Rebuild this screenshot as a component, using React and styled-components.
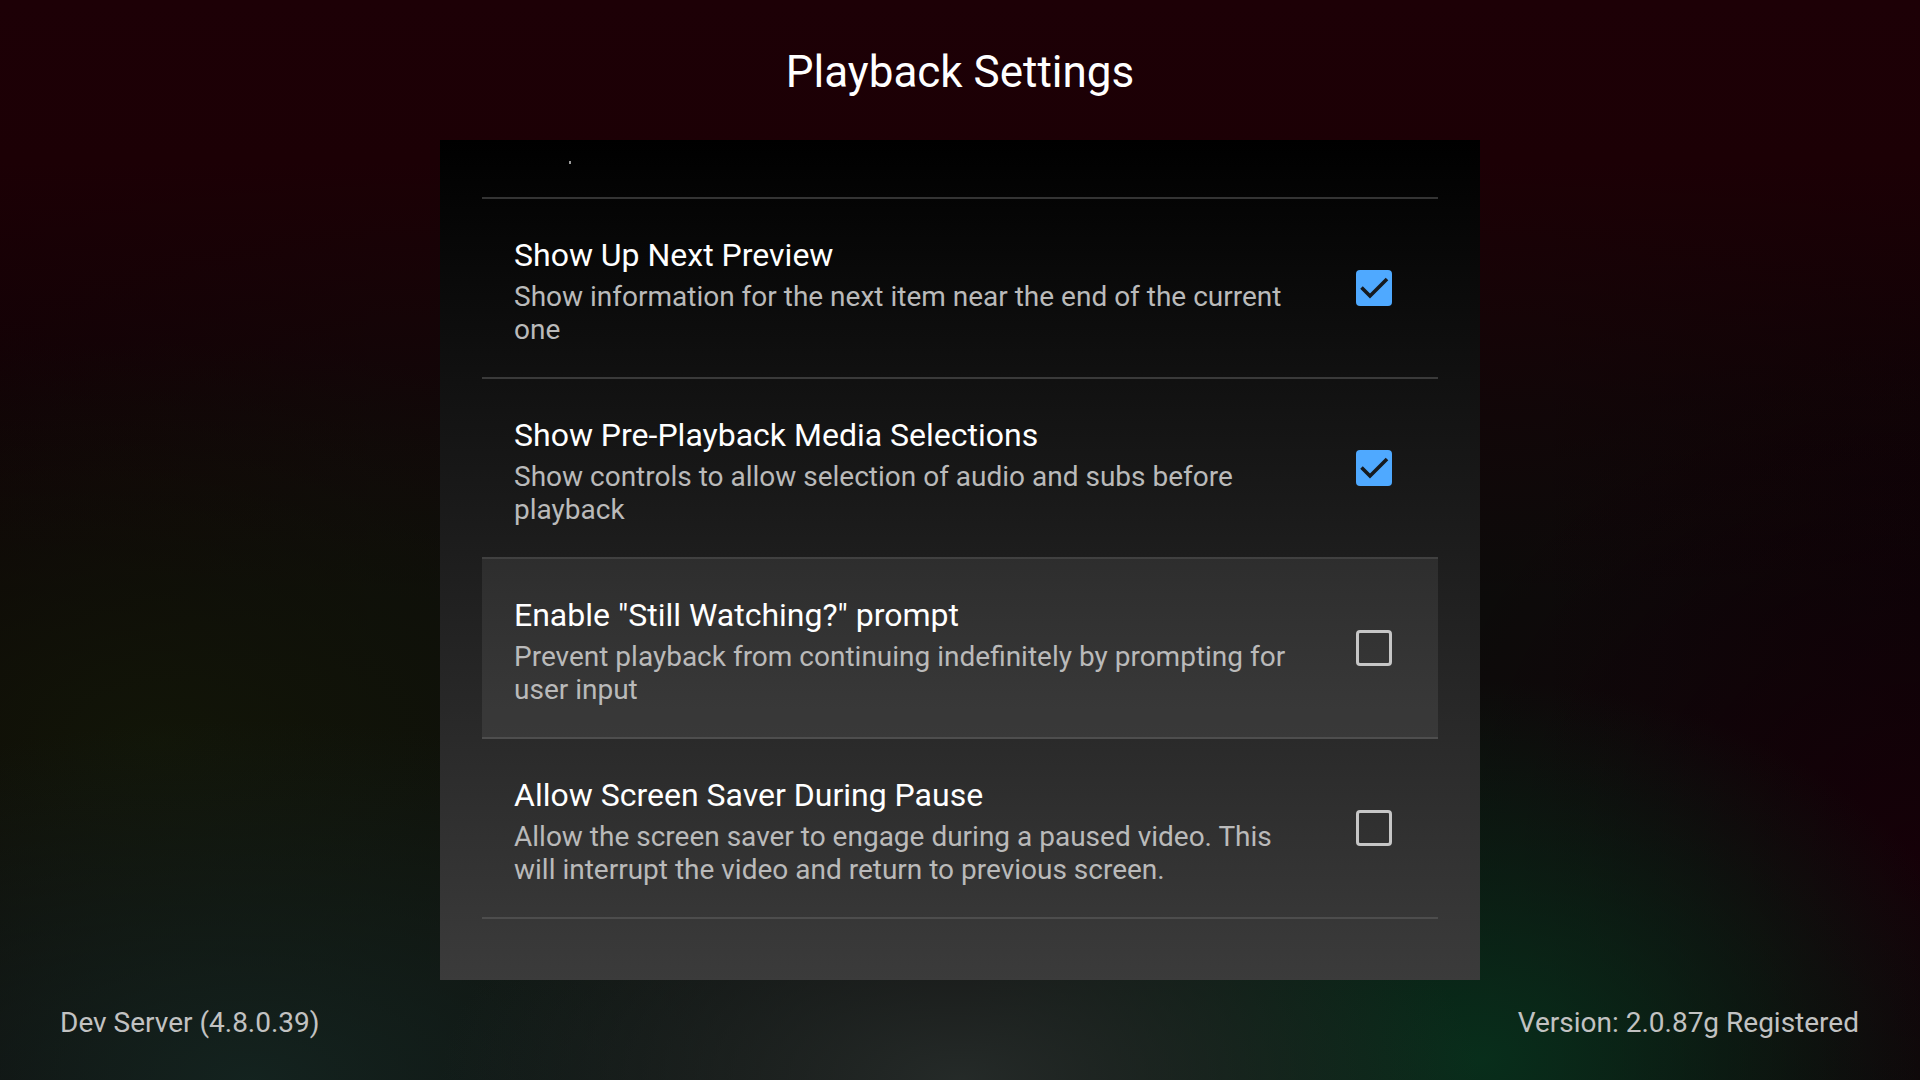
import React from "react";
import styled, { createGlobalStyle } from "styled-components";

const Global = createGlobalStyle`
  html, body { margin: 0; padding: 0; }
  body {
    width: 1920px;
    height: 1080px;
    overflow: hidden;
    font-family: Roboto, "Noto Sans", "Liberation Sans", sans-serif;
    background: #0a0707;
  }
`;

const Page = styled.div`
  width: 1920px;
  height: 1080px;
  display: flex;
  flex-direction: column;
  background:
    radial-gradient(ellipse 520px 260px at 960px 1080px, rgba(38, 44, 42, 0.95), rgba(38, 44, 42, 0) 100%),
    radial-gradient(ellipse 520px 380px at 1480px 1060px, rgba(8, 48, 28, 0.95), rgba(8, 48, 28, 0) 100%),
    radial-gradient(ellipse 700px 360px at 250px 1080px, rgba(20, 36, 32, 0.95), rgba(20, 36, 32, 0) 100%),
    radial-gradient(ellipse 520px 520px at 1920px 860px, rgba(22, 0, 8, 0.95), rgba(22, 0, 8, 0) 100%),
    radial-gradient(ellipse 720px 400px at 160px 740px, rgba(18, 22, 8, 0.95), rgba(18, 22, 8, 0) 100%),
    linear-gradient(180deg, #1d0006 0px, #1c0005 160px, rgba(22, 2, 6, 0.55) 400px, rgba(12, 10, 10, 0) 600px),
    linear-gradient(90deg, #0c0306 0%, rgba(12, 3, 6, 0) 20%, rgba(12, 3, 6, 0) 80%, #080406 100%),
    #0c0b0a;
`;

const Header = styled.header`
  height: 140px;
  box-sizing: border-box;
  padding-top: 46px;
  text-align: center;
`;

const Title = styled.h1`
  margin: 0;
  font-size: 44px;
  line-height: 52px;
  font-weight: 400;
  color: #ffffff;
`;

const Panel = styled.main`
  width: 1040px;
  height: 840px;
  margin: 0 auto;
  box-sizing: border-box;
  padding: 0 42px;
  background: linear-gradient(180deg, #000000 0%, #3b3b3b 100%);
  display: flex;
  flex-direction: column;
`;

const TopStub = styled.div`
  height: 59px;
  box-sizing: border-box;
  padding: 21px 0 0 87px;
  border-bottom: 2px solid rgba(100, 100, 100, 0.5);
`;

const Speck = styled.span`
  display: block;
  width: 2px;
  height: 3px;
  background: #9a9a9a;
`;

const Row = styled.div`
  height: 180px;
  box-sizing: border-box;
  display: flex;
  align-items: center;
  padding: 0 46px 0 32px;
  border-bottom: 2px solid rgba(100, 100, 100, 0.5);
  background: ${(p) => (p.$focused ? "rgba(255, 255, 255, 0.075)" : "transparent")};
`;

const TextCol = styled.div`
  width: 790px;
  padding-top: 3px;
  display: flex;
  flex-direction: column;
`;

const RowTitle = styled.div`
  font-size: 32px;
  line-height: 44px;
  color: #ffffff;
`;

const RowDesc = styled.div`
  margin-top: 3px;
  font-size: 28px;
  line-height: 33px;
  color: #bababa;
`;

const Box = styled.div`
  margin-left: auto;
  width: 36px;
  height: 36px;
  box-sizing: border-box;
  border-radius: 4px;
  background: ${(p) => (p.$checked ? "#4fa9ff" : "transparent")};
  border: ${(p) => (p.$checked ? "none" : "3px solid #c6c6c6")};
  display: flex;
  align-items: center;
  justify-content: center;
  flex-shrink: 0;
`;

const Footer = styled.footer`
  flex: 1;
  box-sizing: border-box;
  padding: 26px 61px 0 60px;
  display: flex;
  justify-content: space-between;
  align-items: flex-start;
`;

const FootText = styled.span`
  font-size: 28px;
  line-height: 34px;
  color: #c2c2c2;
`;

const Check = () => (
  <svg width="36" height="36" viewBox="0 0 36 36">
    <path d="M5.5 17.5 L14 26 L31 9" fill="none" stroke="#161a1f" strokeWidth="3.6" strokeLinecap="butt" strokeLinejoin="miter" />
  </svg>
);

const settings = [
  {
    title: "Show Up Next Preview",
    desc: "Show information for the next item near the end of the current one",
    checked: true,
  },
  {
    title: "Show Pre-Playback Media Selections",
    desc: "Show controls to allow selection of audio and subs before playback",
    checked: true,
  },
  {
    title: 'Enable "Still Watching?" prompt',
    desc: "Prevent playback from continuing indefinitely by prompting for user input",
    checked: false,
    focused: true,
  },
  {
    title: "Allow Screen Saver During Pause",
    desc: "Allow the screen saver to engage during a paused video. This will interrupt the video and return to previous screen.",
    checked: false,
  },
];

export default function App() {
  return (
    <Page>
      <Global />
      <Header>
        <Title>Playback Settings</Title>
      </Header>
      <Panel>
        <TopStub>
          <Speck />
        </TopStub>
        {settings.map((s) => (
          <Row key={s.title} $focused={s.focused}>
            <TextCol>
              <RowTitle>{s.title}</RowTitle>
              <RowDesc>{s.desc}</RowDesc>
            </TextCol>
            <Box $checked={s.checked}>{s.checked && <Check />}</Box>
          </Row>
        ))}
      </Panel>
      <Footer>
        <FootText>Dev Server (4.8.0.39)</FootText>
        <FootText>Version: 2.0.87g Registered</FootText>
      </Footer>
    </Page>
  );
}
